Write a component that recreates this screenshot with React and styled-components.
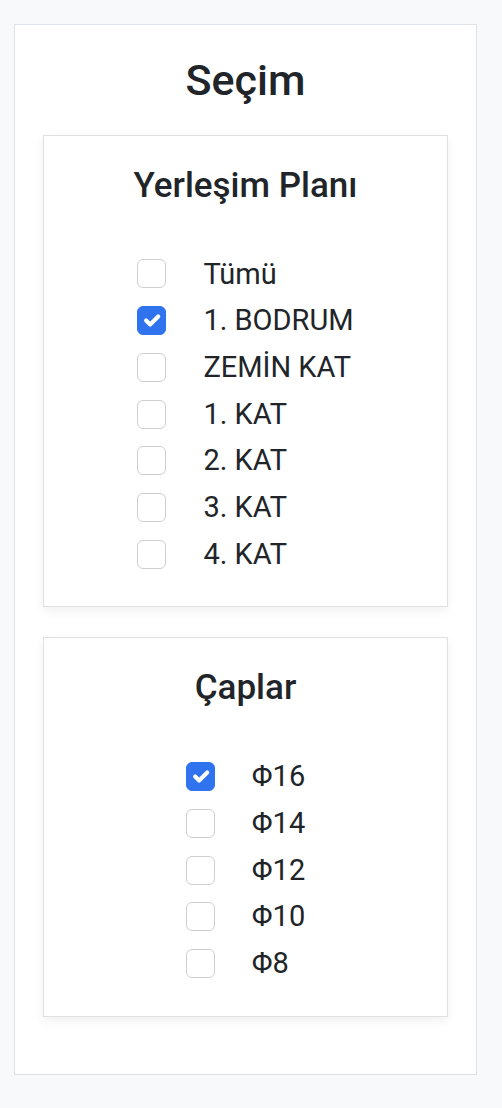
import React, { useState } from "react";
import styled, { createGlobalStyle } from "styled-components";

const Global = createGlobalStyle`
  html, body { margin: 0; padding: 0; background: #f8f9fa; }
  body { font-family: Roboto, "Liberation Sans", Arial, sans-serif; color: #212529; }
  * { box-sizing: border-box; }
`;

const Panel = styled.div`
  margin: 24px 25px 33px 14px;
  background: #fff;
  border: 1px solid #dee2e6;
  padding: 30px 28px 57px 28px;
`;

const Title = styled.h2`
  margin: 0 0 28px;
  text-align: center;
  font-size: 43px;
  font-weight: 500;
  line-height: 1.2;
`;

const Stack = styled.div`
  display: flex;
  flex-direction: column;
  gap: 30px;
`;

const Card = styled.section`
  background: #fff;
  border: 1px solid #e0e0e0;
  box-shadow: 0 4px 10px rgba(0, 0, 0, 0.06);
  padding: 29px 20px 29px;
  display: flex;
  flex-direction: column;
  align-items: center;
`;

const CardTitle = styled.h3`
  margin: 0 0 44px;
  text-align: center;
  font-size: 35px;
  font-weight: 500;
  line-height: 1.2;
`;

const List = styled.div`
  display: flex;
  flex-direction: column;
  align-items: flex-start;
`;

const Row = styled.label`
  display: flex;
  align-items: center;
  gap: 37px;
  height: 46.7px;
  line-height: 46.7px;
  font-size: 29px;
  cursor: pointer;
`;

const Box = styled.span`
  flex: none;
  width: 29px;
  height: 29px;
  border-radius: 6px;
  border: 1px solid ${(p) => (p.$checked ? "#2f73ef" : "#cfcfcf")};
  background: ${(p) => (p.$checked ? "#2f73ef" : "#fff")};
  display: flex;
  align-items: center;
  justify-content: center;
`;

const Check = () => (
  <svg width="27" height="27" viewBox="0 0 20 20" fill="none">
    <path d="m6 10 3 3 6-6" stroke="#fff" strokeWidth="3" strokeLinecap="round" strokeLinejoin="round" />
  </svg>
);

function CheckList({ items, initial }) {
  const [sel, setSel] = useState(initial);
  return (
    <List>
      {items.map((it) => {
        const c = sel.includes(it);
        return (
          <Row key={it} onClick={() => setSel(c ? sel.filter((s) => s !== it) : [...sel, it])}>
            <Box $checked={c}>{c && <Check />}</Box>
            <span>{it}</span>
          </Row>
        );
      })}
    </List>
  );
}

export default function App() {
  return (
    <>
      <Global />
      <Panel>
        <Title>Seçim</Title>
        <Stack>
          <Card>
            <CardTitle>Yerleşim Planı</CardTitle>
            <CheckList
              items={["Tümü", "1. BODRUM", "ZEMİN KAT", "1. KAT", "2. KAT", "3. KAT", "4. KAT"]}
              initial={["1. BODRUM"]}
            />
          </Card>
          <Card>
            <CardTitle>Çaplar</CardTitle>
            <CheckList items={["Φ16", "Φ14", "Φ12", "Φ10", "Φ8"]} initial={["Φ16"]} />
          </Card>
        </Stack>
      </Panel>
    </>
  );
}
